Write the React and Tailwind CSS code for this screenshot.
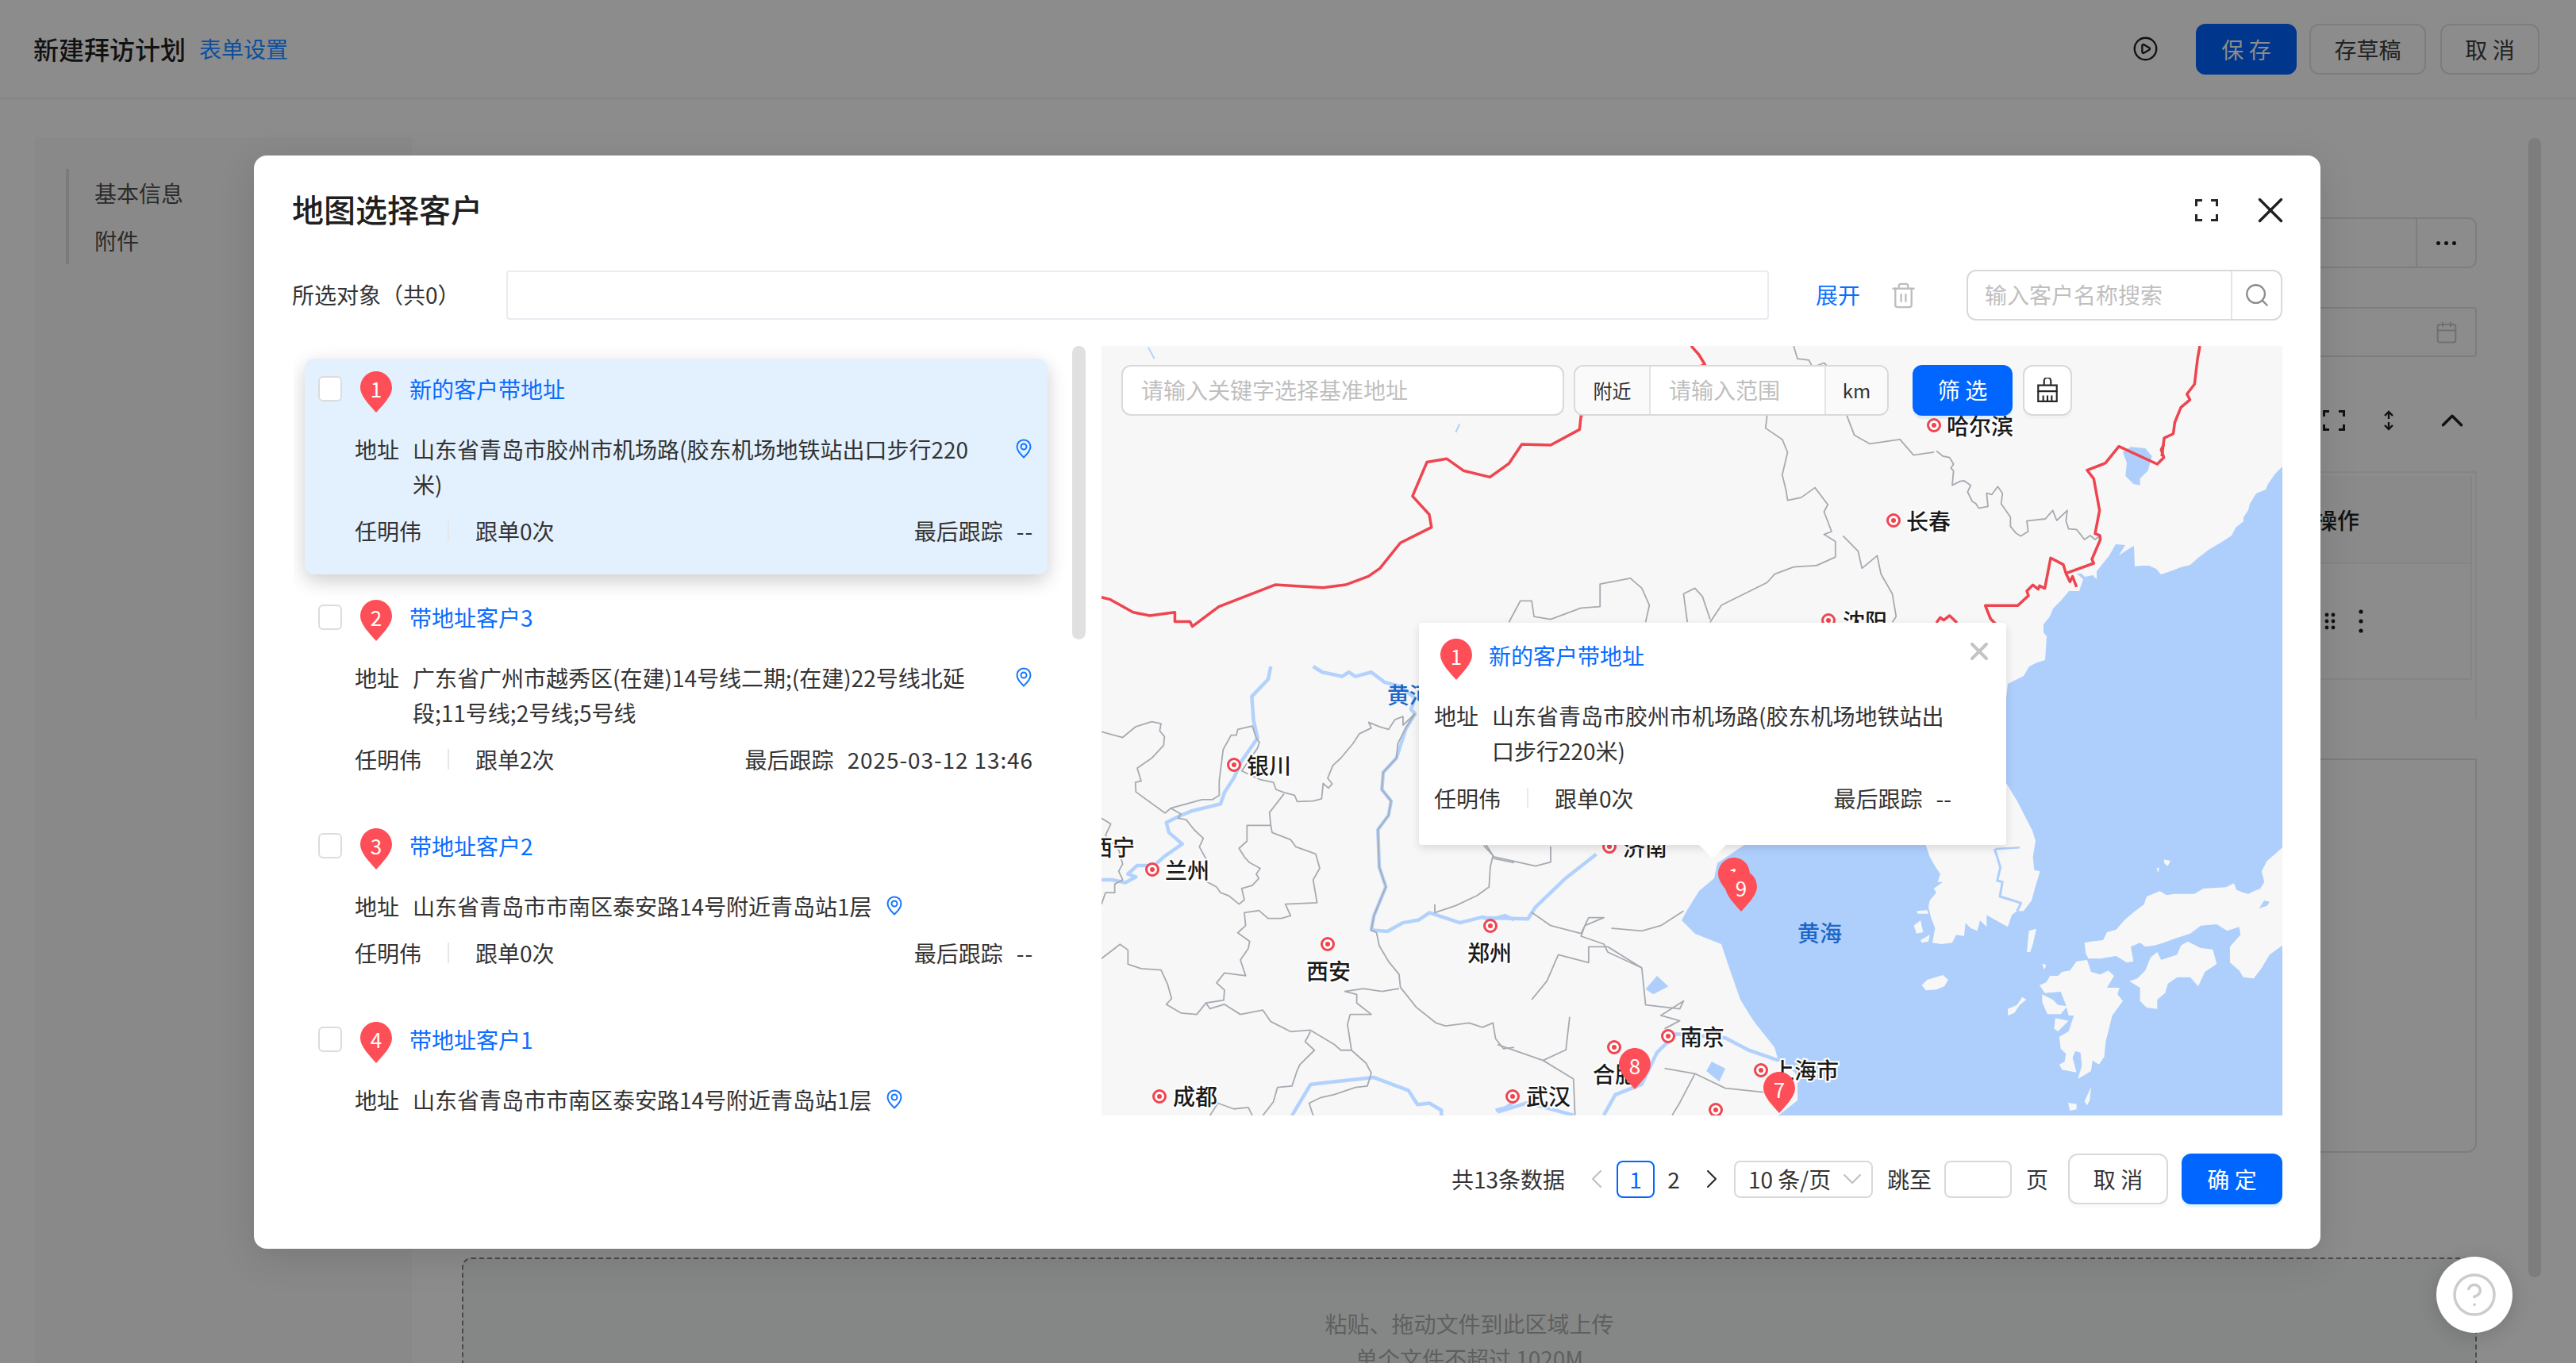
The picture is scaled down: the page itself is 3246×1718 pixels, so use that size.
import { Calendar, ChevronDown, ChevronLeft, ChevronRight, ChevronUp, CirclePlay, CircleHelp, Search, Trash2, X } from "lucide-react";

const items = [
  { n: 1, title: "新的客户带地址", lines: ["山东省青岛市胶州市机场路(胶东机场地铁站出口步行220", "米)"], count: 0, last: "--", active: true },
  { n: 2, title: "带地址客户3", lines: ["广东省广州市越秀区(在建)14号线二期;(在建)22号线北延", "段;11号线;2号线;5号线"], count: 2, last: "2025-03-12 13:46" },
  { n: 3, title: "带地址客户2", lines: ["山东省青岛市市南区泰安路14号附近青岛站1层"], count: 0, last: "--" },
  { n: 4, title: "带地址客户1", lines: ["山东省青岛市市南区泰安路14号附近青岛站1层"], count: 0, last: "--" },
];

// page coords of the map labels, the map panel starts at 1388,436
const cities = [
  { name: "哈尔滨", mx: 2437, my: 536, lx: 2453, ly: 536 },
  { name: "长春", mx: 2386, my: 656, lx: 2402, ly: 656 },
  { name: "沈阳", mx: 2304, my: 782, lx: 2322, ly: 782 },
  { name: "银川", mx: 1555, my: 964, lx: 1571, ly: 964 },
  { name: "西宁", mx: 1360, my: 1067, lx: 1374, ly: 1067 },
  { name: "兰州", mx: 1452, my: 1096, lx: 1468, ly: 1096 },
  { name: "西安", mx: 1673, my: 1190, lx: 1646, ly: 1223 },
  { name: "郑州", mx: 1878, my: 1167, lx: 1849, ly: 1200 },
  { name: "济南", mx: 2028, my: 1067, lx: 2045, ly: 1067 },
  { name: "南京", mx: 2102, my: 1306, lx: 2117, ly: 1306 },
  { name: "合肥", mx: 2034, my: 1320, lx: 2007, ly: 1353 },
  { name: "上海市", mx: 2219, my: 1349, lx: 2233, ly: 1348 },
  { name: "成都", mx: 1461, my: 1382, lx: 1478, ly: 1381 },
  { name: "武汉", mx: 1906, my: 1382, lx: 1923, ly: 1381 },
  { name: "", mx: 2162, my: 1399, lx: 0, ly: 0 },
];

const RED = "#ee4550";
const GRAY = "#a6abb1";
const RIVER = "#b2d2fd";
const SEA = "#aecffc";
const LAND = "#f7f7f7";

const seaPoints = "2876,588 2867,597 2858,610 2855,617 2843,622 2835,635 2833,643 2827,652 2827,657 2817,665 2812,675 2800,683 2783,693 2770,703 2760,712 2748,715 2735,720 2723,724 2717,717 2708,713 2698,713 2690,714 2689,688 2682,692 2670,700 2678,687 2666,686 2658,700 2650,710 2642,720 2642,730 2637,725 2627,727 2623,723 2617,723 2625,730 2620,745 2607,745 2597,757 2587,767 2583,777 2575,787 2575,797 2579,802 2577,832 2567,835 2557,840 2550,852 2540,857 2530,862 2528,880 2400,900 2200,1000 2198,1065 2164,1088 2160,1107 2141,1123 2126,1147 2119,1160 2136,1177 2169,1190 2179,1220 2186,1240 2193,1260 2204,1278 2212,1290 2236,1320 2241,1337 2262,1352 2265,1363 2265,1387 2241,1406 2876,1406";

// coordinates below are in the crop's own grid, the <g> transforms map them to the page
const upperGray = [
  "920,45 925,90 940,95 945,120 960,105 970,130",
  "885,290 883,335 905,375 912,420 905,500 910,555 912,590 930,580 948,545 965,605 960,630 970,700 960,710 975,735 975,790 950,820 920,825 895,850 885,880 855,920 825,960 810,1020",
  "990,290 1000,360 1020,390 1060,375 1078,430 1105,420",
  "985,715 1005,770 1010,830 1030,785 1035,850 1050,920 1055,1000 1050,1020",
  "545,1020 560,945 575,945 578,1000 600,1010 630,980 640,970 665,965 665,885 705,865 720,900 730,960 725,1020",
  "780,1020 775,920 790,900 800,930 810,1010",
];
const upperRed = [
  "785,45 795,75 803,110 640,290 638,340 600,395 562,392 545,460 520,508 485,485 463,443 437,455 418,575 440,640 443,685 402,740 375,830 360,858 330,888 300,898 237,888 163,965 128,1035 125,1018 105,1018 105,985 72,997 50,985 20,940 8,932",
  "1455,45 1452,90 1448,180 1438,215 1442,235 1430,262 1422,315 1420,355 1408,370 1405,435",
];

const neRed = [
  "860,0 850,20 860,50 835,75 690,8 640,70 630,75 570,98 595,130 617,250 600,338 618,345 620,360 588,435 595,450 490,488 480,455 432,430 410,545 390,535 385,548 365,532 342,555 348,572 308,610 185,610 205,660 225,680",
  "490,488 505,520 515,500 530,540",
  "0,675 15,655 28,665 50,648 78,675",
];
const neGray = "0,25 25,45 50,50 65,75 55,90 65,100 60,155 90,140 105,138 130,155 118,180 135,215 150,225 160,242 195,235 190,185 210,190 232,160 250,185 245,225 280,275 280,310 300,335 318,347 347,330 342,290 412,282 440,250 455,288 495,250 490,290 500,320 530,322 560,360 582,345 600,360 620,345";

const westGray = [
  "0,228 80,248 130,210 190,193 225,200 220,225 238,245 235,275 190,320 135,355 150,400 128,405 130,438 240,512 262,495 380,465 420,465 445,450 445,400 460,290 490,240 510,240 515,220 570,208 585,250 597,265 590,285 530,365 600,395 650,405 660,430 690,440 730,450 740,472 800,470 832,462 838,408 858,425 872,410 855,390 875,345 905,320 950,270 975,235 1020,215 1010,195 1050,210 1085,220 1110,185 1140,175 1140,205 1185,165",
  "262,495 300,515 290,530 320,535 350,570 385,600 370,630 400,680 395,750 435,770 450,790 480,800 520,830 540,815 530,775 570,765 595,740 585,725 600,705 560,685 540,665 520,635 550,610 550,555 640,555 635,510 690,445",
  "640,555 645,580 715,605 735,630 810,655 825,705 800,745 815,825 695,830 715,870 680,880 630,880 595,852 540,860 545,905 515,930 560,960 555,985 525,1025 545,1080 465,1070 435,1105 465,1130 462,1165 395,1175 410,1195 465,1180 525,1215 610,1200 640,1240 715,1275 790,1270 880,1320 905,1340 945,1340 1000,1385 1020,1420 1005,1465 960,1470 880,1495 830,1505 785,1525 800,1568",
  "1185,165 1150,215 1120,270 1115,320 1065,370 1060,430 1095,470 1085,520 1045,570 1050,700 1075,770 1030,870 1020,920 1040,930 1050,975 1085,1030 1125,1075 1130,1120 1190,1190 1265,1245 1300,1255 1390,1245 1440,1260 1480,1245 1490,1300 1520,1335 1560,1330",
  "1125,1125 1060,1135 990,1125 920,1135 965,1145 965,1175 1020,1215 940,1215 930,1250 945,1340",
  "0,1020 70,970 100,990 100,1040 150,1055 225,1060 250,1110 265,1160 245,1180 300,1210 360,1215 395,1175",
  "790,1275 770,1310 805,1340 750,1390 740,1410 720,1465 665,1470 650,1520 610,1568",
  "0,530 35,550 15,590 65,640 80,690 65,715 80,745 50,760 50,790 15,790 0,830",
  "1260,830 1260,860 1340,835 1420,800 1465,770 1470,700 1480,660 1445,625",
  "1480,670 1560,685",
  "410,1568 440,1525 500,1545 555,1540 570,1568",
];
const westRiver = [
  "640,0 630,45 568,105 575,190 590,250 530,330 500,390 465,440 450,480 340,505 300,520 245,545 255,580 305,620 235,665 200,695 135,695 100,725 130,735 90,755 40,745 0,745",
  "800,0 835,20 910,35 935,20 960,35 1020,20 1070,55 1130,70 1185,110 1170,150 1185,165 1150,220 1115,320 1065,370 1060,430 1095,470 1085,520 1045,570 1050,700 1075,770 1030,870 1020,920 1080,925 1140,895 1200,885 1240,860 1355,895 1440,875 1470,885 1525,870 1560,885",
  "720,1568 790,1460 830,1455 1030,1435 1130,1470 1160,1480 1195,1530 1240,1525 1285,1550 1285,1568",
  "1490,1550 1530,1540 1560,1520",
];

const lowerGray = [
  "530,1070 590,1130 620,1090 625,965",
  "590,1130 630,1200 632,1337",
  "575,900 595,830 610,730 650,760 650,700 675,700 720,780 725,920 770,935 775,905 745,960 770,980 750,1010",
  "525,360 580,395 600,380 600,320",
  "515,315 525,360",
  "575,570 600,620 640,650 650,590 670,590 645,620 640,660 670,690 675,720 720,780",
  "680,630 720,640 745,620 775,565",
  "750,1160 790,1180 830,1235 880,1250",
  "790,1180 770,1290 760,1337",
];
const lowerRiver = [
  "510,590 570,595 580,550 620,440 660,350",
  "530,1325 570,1290 630,1337",
  "670,1337 685,1260 720,1220 740,1100 765,1030 830,1045 860,1090 900,1130",
];

const japanLand = [
  "200,-219 200,15 215,60 235,95 255,125 245,155 265,155 230,180 240,195 215,225 210,250 220,290 235,330 225,385 260,390 300,385 315,355 345,360 350,310 370,330 395,340 405,300 430,325 430,280 465,300 510,325 525,280 545,265 570,265 600,225 615,170 632,115 610,110 605,60 615,0 603,-39 546,-150 504,-219",
  "1548,25 1520,50 1490,75 1470,115 1480,155 1465,180 1440,190 1420,200 1400,195 1375,185 1365,160 1335,175 1250,180 1215,200 1140,200 1110,205 1085,190 1035,210 1025,240 985,270 950,300 920,335 885,345 870,375 825,380 800,385 805,425 815,445 860,445 920,435 960,460 985,455 975,400 1010,385 1030,400 1065,395 1100,385 1140,370 1200,350 1240,320 1300,315 1340,340 1385,325 1390,355 1350,400 1350,460 1385,490 1400,515 1440,520 1470,480 1500,430 1548,395",
  "970,530 1000,520 1030,490 1050,440 1075,420 1090,450 1150,430 1165,395 1190,380 1240,405 1285,410 1300,465 1255,495 1230,550 1200,515 1150,515 1115,540 1105,575 1075,600 1075,635 1035,630 1010,605 1010,555",
  "745,490 770,455 810,450 825,495 860,505 890,490 912,510 885,555 932,555 925,580 945,605 905,660 880,760 875,815 855,845 830,830 825,870 775,900 790,850 785,800 765,795 755,820 770,875 715,865 705,845 725,835 730,805 710,785 705,740 740,720 760,660 740,660 730,620 710,570 650,575 630,545 655,535 670,510 700,510 715,495",
  "640,580 680,600 700,620 735,625 710,655 660,655 640,610",
  "690,670 740,680 720,700 700,720 685,710",
  "185,545 205,525 265,507 285,525 270,550 240,562 200,565",
  "590,340 618,332 605,390 595,420 582,420",
  "1100,70 1125,75 1115,95 1102,85",
  "1072,105 1082,100 1080,120",
  "738,990 770,995 770,1015 745,1020",
  "800,985 825,930 820,980 810,1000",
  "510,635 545,620 565,590 580,600 555,620 535,650 510,660",
  "165,265 205,262 210,275 170,275",
  "155,320 180,300 190,345 165,350",
  "180,375 215,355 210,380 185,385",
  "640,465 655,468 650,485 645,480",
];

function Line({ points, color, width }) {
  return <polyline points={points} fill="none" stroke={color} strokeWidth={width} strokeLinejoin="round" vectorEffect="non-scaling-stroke" />;
}

function MapDrawing() {
  return (
    <svg className="absolute inset-0" width="1488" height="970" viewBox="1388 436 1488 970">
      <polygon fill={SEA} points={seaPoints} />

      <g transform="translate(2360 1060) scale(0.3333)">
        {japanLand.map((p, i) => <polygon key={i} fill={LAND} points={p} />)}
        <Line points="465,30 555,25" color={SEA} width="2.5" />
        <Line points="460,30 470,60 482,100 470,150 490,155 480,210 530,225 560,235 545,265" color={SEA} width="3" />
        <polygon fill={SEA} points="1460,255 1480,225 1500,230 1490,245" />
      </g>

      <g transform="translate(1380 420) scale(0.9567 0.3571)">
        {upperGray.map((p, i) => <Line key={i} points={p} color={GRAY} width="1.8" />)}
        {upperRed.map((p, i) => <Line key={i} points={p} color={RED} width="3.5" />)}
        <Line points="70,50 78,90" color={RIVER} width="2" />
        <Line points="480,320 475,350" color={RIVER} width="2" />
      </g>

      <g transform="translate(2440 560) scale(0.3333)">
        <polygon fill={SEA} points="705,30 735,10 790,15 815,45 800,100 770,130 770,155 745,150 715,120 720,70" />
        <Line points={neGray} color={GRAY} width="1.8" />
        {neRed.map((p, i) => <Line key={i} points={p} color={RED} width="3.5" />)}
      </g>

      <g transform="translate(1388 840) scale(0.3333 0.361)">
        {westRiver.map((p, i) => <Line key={i} points={p} color={RIVER} width="4.5" />)}
        {westGray.map((p, i) => <Line key={i} points={p} color={GRAY} width="1.8" />)}
      </g>

      <g transform="translate(1380 960) scale(0.9567 0.3333)">
        <polygon fill={SEA} points="812,1135 830,1160 822,1210 805,1170" />
        <polygon fill={SEA} points="740,810 755,850 735,880 725,860" />
        {lowerRiver.map((p, i) => <Line key={i} points={p} color={RIVER} width="4.5" />)}
        {lowerGray.map((p, i) => <Line key={i} points={p} color={GRAY} width="1.8" />)}
      </g>

      {cities.map((c) => (
        <g key={c.mx}>
          <circle cx={c.mx} cy={c.my} r="7.5" fill="#fff" stroke={RED} strokeWidth="3" />
          <circle cx={c.mx} cy={c.my} r="3" fill={RED} />
        </g>
      ))}
    </svg>
  );
}

function Pin({ n }) {
  return (
    <div className="relative w-[40px] h-[52px] shrink-0 text-center text-white text-[26px] leading-[44px]">
      <svg className="absolute inset-0" width="40" height="52" viewBox="0 0 40 52">
        <path d="M20 0C31 0 40 9 40 21C40 31 28 43 20 52C12 43 0 31 0 21C0 9 9 0 20 0Z" fill="#fe4f58" />
      </svg>
      <span className="relative">{n}</span>
    </div>
  );
}

function LocIcon() {
  return (
    <svg className="shrink-0" width="20" height="25" viewBox="0 0 20 25" fill="none" stroke="#1677ff" strokeWidth="2">
      <path d="M10 1.5C5 1.5 1.5 5.5 1.5 10C1.5 15.5 10 23.5 10 23.5C10 23.5 18.5 15.5 18.5 10C18.5 5.5 15 1.5 10 1.5Z" />
      <circle cx="10" cy="10" r="3.5" />
    </svg>
  );
}

function CustomerCard({ item }) {
  return (
    <div className={item.active ? "w-[936px] shrink-0 rounded-[12px] bg-[#e3f1fe] shadow-[0_8px_24px_rgba(0,0,0,0.2)] pt-[16px] pb-[33px]" : "w-[936px] shrink-0 pt-[16px] pb-[33px]"}>
      <div className="flex items-center pl-[17px] h-[52px]">
        <span className="w-[30px] h-[32px] rounded-[6px] border-2 border-[#dcdcdc] bg-white mr-[23px] -mt-[8px]" />
        <Pin n={item.n} />
        <span className="ml-[22px] text-[#0a6cff] -mt-[9px]">{item.title}</span>
      </div>
      <div className="flex items-start mt-[24px] pl-[63px]">
        <span className="w-[73px] shrink-0">地址</span>
        <span className={item.lines.length > 1 ? "w-[760px] shrink-0" : "shrink-0"}>
          {item.lines.map((l, i) => (
            <span key={i} className="block">{l}</span>
          ))}
        </span>
        <span className={item.lines.length > 1 ? "mt-[9px]" : "mt-[9px] ml-[18px]"}>
          <LocIcon />
        </span>
      </div>
      <div className="flex items-center mt-[15px] pl-[63px] pr-[18px]">
        <span>任明伟</span>
        <span className="w-[2px] h-[26px] bg-[#e4e6e8] ml-[33px] mr-[33px]" />
        <span>跟单{item.count}次</span>
        <span className="ml-auto">最后跟踪</span>
        <span className="ml-[17px] tracking-[0.9px]">{item.last}</span>
      </div>
    </div>
  );
}

function MapPopup() {
  return (
    <div className="absolute left-[400px] top-[349px] w-[740px] h-[280px] bg-white rounded-[4px] shadow-[0_4px_12px_rgba(0,0,0,0.12)] pl-[19px] pr-[69px] pt-[20px]">
      <div className="flex items-center pl-[8px] h-[52px]">
        <Pin n={1} />
        <span className="ml-[21px] text-[#0a6cff] -mt-[10px]">新的客户带地址</span>
      </div>
      <X className="absolute right-[16px] top-[18px] text-[#c4c4c4]" size={36} strokeWidth={2.7} />
      <div className="flex mt-[23px]">
        <span className="w-[73px] shrink-0">地址</span>
        <span>山东省青岛市胶州市机场路(胶东机场地铁站出<br />口步行220米)</span>
      </div>
      <div className="flex items-center mt-[16px]">
        <span>任明伟</span>
        <span className="w-[2px] h-[26px] bg-[#e9e9e9] ml-[33px] mr-[33px]" />
        <span>跟单0次</span>
        <span className="ml-auto">最后跟踪</span>
        <span className="ml-[17px]">--</span>
      </div>
      <div className="absolute left-[353px] top-full w-0 h-0 border-l-[17px] border-r-[17px] border-t-[17px] border-l-transparent border-r-transparent border-t-white" />
    </div>
  );
}

function BrushIcon() {
  return (
    <svg width="30" height="32" viewBox="0 0 28 30" fill="none" stroke="#262626" strokeWidth="2">
      <path d="M10 9V4a4 4 0 0 1 8 0v5" />
      <path d="M3 9h22v7H3z" />
      <path d="M3 16v12h22V16" />
      <path d="M9 21v7M14 21v7M19 21v7" />
    </svg>
  );
}

function MapPanel() {
  return (
    <div className="relative w-[1488px] h-[970px] overflow-hidden bg-[#f7f7f7]">
      <MapDrawing />
      {cities.filter((c) => c.name).map((c) => (
        <span
          key={c.name}
          className="absolute text-[28px] leading-[40px] font-medium text-[#1a1a1a] [paint-order:stroke] [-webkit-text-stroke:4px_#ffffff] whitespace-nowrap"
          style={{ left: c.lx - 1388, top: c.ly - 436 - 20 }}
        >
          {c.name}
        </span>
      ))}
      <span className="absolute left-[360px] top-[419px] text-[#1c66c6] font-medium leading-[40px]">黄河</span>
      <span className="absolute left-[877px] top-[719px] text-[#1c66c6] font-medium leading-[40px]">黄海</span>

      <div className="absolute left-[777px] top-[645px]"><Pin n="1" /></div>
      <div className="absolute left-[786px] top-[661px]"><Pin n="9" /></div>
      <div className="absolute left-[652px] top-[885px]"><Pin n="8" /></div>
      <div className="absolute left-[834px] top-[915px]"><Pin n="7" /></div>

      <MapPopup />

      <div className="absolute left-[25px] top-[24px] flex">
        <div className="w-[558px] h-[64px] rounded-[12px] border-2 border-[#d9d9d9] bg-white pl-[23px] pb-[2px] flex items-center text-[#bfbfbf]">请输入关键字选择基准地址</div>
        <div className="ml-[12px] w-[397px] h-[64px] rounded-[12px] border-2 border-[#d9d9d9] bg-white flex items-center overflow-hidden">
          <div className="w-[95px] h-full bg-[#fafafa] border-r-2 border-[#e4e4e4] flex items-center justify-center text-[24px]">附近</div>
          <div className="flex-1 pl-[23px] pb-[2px] text-[#bfbfbf]">请输入范围</div>
          <div className="w-[79px] h-full bg-[#fafafa] border-l-2 border-[#e4e4e4] flex items-center justify-center text-[24px]">km</div>
        </div>
        <button className="ml-[30px] w-[126px] h-[64px] rounded-[12px] bg-[#0066ff] text-white pb-[2px] shadow-[0_4px_0_rgba(5,145,255,0.1)]">筛 选</button>
        <button className="ml-[13px] w-[62px] h-[64px] rounded-[12px] border-2 border-[#d9d9d9] bg-white flex items-center justify-center shadow-[0_4px_0_rgba(0,0,0,0.02)]">
          <BrushIcon />
        </button>
      </div>
    </div>
  );
}

function Pagination() {
  return (
    <div className="flex justify-end items-center h-[64px] mt-[48px]">
      <span>共13条数据</span>
      <ChevronLeft className="ml-[20px] mr-[5px] -my-[8px] text-[#bfbfbf]" size={40} strokeWidth={1.2} />
      <span className="w-[48px] h-[47px] rounded-[8px] border-2 border-[#0066ff] text-[#0066ff] flex items-center justify-center">1</span>
      <span className="w-[48px] text-center mr-[12px]">2</span>
      <ChevronRight className="mr-[8px] -ml-[8px] -my-[8px] text-[#262626]" size={40} strokeWidth={1.2} />
      <div className="w-[175px] h-[47px] rounded-[8px] border-2 border-[#d9d9d9] pl-[16px] pr-[10px] flex items-center justify-between mr-[18px]">
        <span className="whitespace-nowrap">10 条/页</span>
        <ChevronDown className="-my-[8px] -ml-[10px] -mr-[6px] text-[#bfbfbf]" size={40} strokeWidth={1.2} />
      </div>
      <span className="mr-[16px]">跳至</span>
      <span className="w-[85px] h-[47px] rounded-[8px] border-2 border-[#d9d9d9] mr-[18px]" />
      <span className="mr-[25px]">页</span>
      <button className="w-[126px] h-[64px] rounded-[12px] border-2 border-[#d9d9d9] bg-white mr-[17px] shadow-[0_4px_0_rgba(0,0,0,0.02)]">取 消</button>
      <button className="w-[127px] h-[64px] rounded-[12px] bg-[#0066ff] text-white shadow-[0_4px_0_rgba(5,145,255,0.1)]">确 定</button>
    </div>
  );
}

function Modal() {
  return (
    <div className="absolute left-[320px] top-[196px] w-[2604px] bg-white rounded-[16px] shadow-[0_12px_48px_rgba(0,0,0,0.12)] pl-[50px] pr-[48px] pt-[41px] pb-[56px] text-[28px] leading-[44px] text-[#333333]">
      <div className="flex items-center h-[56px]">
        <h2 className="text-[40px] font-medium text-[#1f1f1f] -ml-[2px] -mt-[4px]">地图选择客户</h2>
        <svg className="ml-auto" width="29" height="28" viewBox="0 0 29 28" fill="none" stroke="#262626" strokeWidth="3">
          <path d="M1.5 9V1.5H9M20 1.5H27.5V9M27.5 19V26.5H20M9 26.5H1.5V19" />
        </svg>
        <X className="ml-[39px] -mr-[12px] -my-[10px] text-[#1f1f1f]" size={54} strokeWidth={1.5} />
      </div>

      <div className="flex items-center mt-[47px] h-[64px]">
        <span className="w-[268px] shrink-0 -ml-[2px] mr-[2px] -mt-[2px]">所选对象（共0）</span>
        <div className="w-[1591px] h-[62px] rounded-[4px] border-2 border-[#e8ebef]" />
        <span className="ml-[59px] -mt-[2px] text-[#0a6fff]">展开</span>
        <Trash2 className="ml-[37px] text-[#bdbdbd]" size={35} strokeWidth={1.6} />
        <div className="ml-auto w-[398px] h-[64px] rounded-[12px] border-2 border-[#d9d9d9] flex items-center">
          <span className="flex-1 pl-[21px] pb-[2px] text-[#bfbfbf]">输入客户名称搜索</span>
          <span className="w-[63px] h-full border-l-2 border-[#e4e4e4] flex items-center justify-center">
            <Search className="text-[#8c8c8c]" size={34} strokeWidth={1.6} />
          </span>
        </div>
      </div>

      <div className="flex mt-[32px] gap-[20px]">
        <div className="relative w-[998px] h-[970px] overflow-hidden pl-[14px] pt-[16px] flex flex-col gap-[16px]">
          {items.map((item) => (
            <CustomerCard key={item.n} item={item} />
          ))}
          <div className="absolute right-0 top-0 w-[17px] h-[370px] rounded-full bg-[#e0e0e0]" />
        </div>
        <MapPanel />
      </div>

      <Pagination />
    </div>
  );
}

function Backdrop() {
  return (
    <>
      <header className="h-[125px] border-b-2 border-[#858585] pl-[42px] pr-[46px] flex items-center">
        <span className="text-[32px] font-medium text-[#111111] -mt-[2px]">新建拜访计划</span>
        <span className="ml-[17px] text-[28px] text-[#0b4f9e] -mt-[2px]">表单设置</span>
        <div className="ml-auto flex items-center text-[28px] text-[#222222]">
          <CirclePlay className="mr-[47px] text-[#111111]" size={33} strokeWidth={1.7} />
          <span className="w-[127px] h-[64px] rounded-[12px] bg-[#00368c] text-[#8c8c8c] flex items-center justify-center">保 存</span>
          <span className="ml-[16px] w-[147px] h-[64px] rounded-[12px] border-2 border-[#7d7d7d] flex items-center justify-center">存草稿</span>
          <span className="ml-[18px] w-[125px] h-[64px] rounded-[12px] border-2 border-[#7d7d7d] flex items-center justify-center">取 消</span>
        </div>
      </header>

      <div className="flex">
        <aside className="ml-[44px] mt-[48px] w-[475px] h-[1545px] bg-[#898989] pl-[39px] pt-[40px]">
          <div className="border-l-4 border-[#7b7b7b] pl-[32px] h-[120px] text-[28px] text-[#2b2b2b] leading-[60px]">
            <div>基本信息</div>
            <div>附件</div>
          </div>
        </aside>

        <main className="w-[2602px] pt-[149px] flex flex-col text-[28px] text-[#111111]">
          <div className="h-[64px] rounded-[10px] border-2 border-[#7d7d7d] flex justify-end">
            <span className="w-[75px] border-l-2 border-[#7d7d7d] flex items-center justify-center gap-[5px]">
              <span className="w-[5px] h-[5px] rounded-full bg-[#111111]" />
              <span className="w-[5px] h-[5px] rounded-full bg-[#111111]" />
              <span className="w-[5px] h-[5px] rounded-full bg-[#111111]" />
            </span>
          </div>
          <div className="mt-[49px] h-[63px] rounded-[4px] border-2 border-[#7d7d7d] flex items-center justify-end pr-[21px]">
            <Calendar className="text-[#707070]" size={30} strokeWidth={1.6} />
          </div>
          <div className="mt-[67px] h-[26px] flex items-center justify-end pr-[8px]">
            <svg width="28" height="26" viewBox="0 0 28 26" fill="none" stroke="#111111" strokeWidth="3">
              <path d="M1.5 8V1.5H8M20 1.5H26.5V8M26.5 18V24.5H20M8 24.5H1.5V18" />
            </svg>
            <svg className="ml-[48px]" width="14" height="26" viewBox="0 0 14 26" fill="none" stroke="#111111" strokeWidth="2.4">
              <path d="M7 2V11M2 7L7 2L12 7M7 15V24M2 19L7 24L12 19" />
            </svg>
            <ChevronUp className="ml-[50px] -my-[10px] text-[#111111]" size={46} strokeWidth={1.8} />
          </div>
          <div className="mt-[51px] h-[312px] border-t-2 border-r-2 border-[#858585] pt-[4px] pr-[4px]">
            <div className="h-[111px] border-r-2 border-b-2 border-[#858585] bg-[#8a8a8a] flex items-center justify-end pr-[140px] font-medium">操作</div>
            <div className="h-[146px] border-r-2 border-b-2 border-[#858585] flex items-center justify-end pr-[135px]">
              <svg className="mr-[29px]" width="14" height="22" viewBox="0 0 14 22" fill="#111111">
                <circle cx="3" cy="3" r="2.4" /><circle cx="11" cy="3" r="2.4" />
                <circle cx="3" cy="11" r="2.4" /><circle cx="11" cy="11" r="2.4" />
                <circle cx="3" cy="19" r="2.4" /><circle cx="11" cy="19" r="2.4" />
              </svg>
              <svg width="6" height="30" viewBox="0 0 6 30" fill="#111111">
                <circle cx="3" cy="3" r="2.6" /><circle cx="3" cy="15" r="2.6" /><circle cx="3" cy="27" r="2.6" />
              </svg>
            </div>
          </div>
          <div className="mt-[50px] h-[497px] rounded-b-[12px] border-2 border-[#7d7d7d]" />
          <div className="ml-[63px] mt-[132px] h-[200px] rounded-[12px] border-2 border-dashed border-[#4a4a4a] bg-[#858786] pt-[59px] text-center text-[#5f5f5f] leading-[44px]">
            <div>粘贴、拖动文件到此区域上传</div>
            <div>单个文件不超过 1020M</div>
          </div>
        </main>
      </div>
    </>
  );
}

export default function App() {
  return (
    <div className="relative w-[3246px] h-[1718px] overflow-hidden bg-[#8c8c8c] font-['Noto_Sans_CJK_SC','Liberation_Sans',sans-serif]">
      <Backdrop />
      <div className="absolute left-[3186px] top-[174px] w-[16px] h-[1436px] rounded-full bg-[#7d7d7d]" />
      <Modal />
      <div className="absolute left-[3070px] top-[1584px] w-[96px] h-[96px] rounded-full bg-white shadow-[0_4px_24px_rgba(0,0,0,0.15)] flex items-center justify-center">
        <CircleHelp className="text-[#cccccc]" size={60} strokeWidth={1.4} />
      </div>
    </div>
  );
}
